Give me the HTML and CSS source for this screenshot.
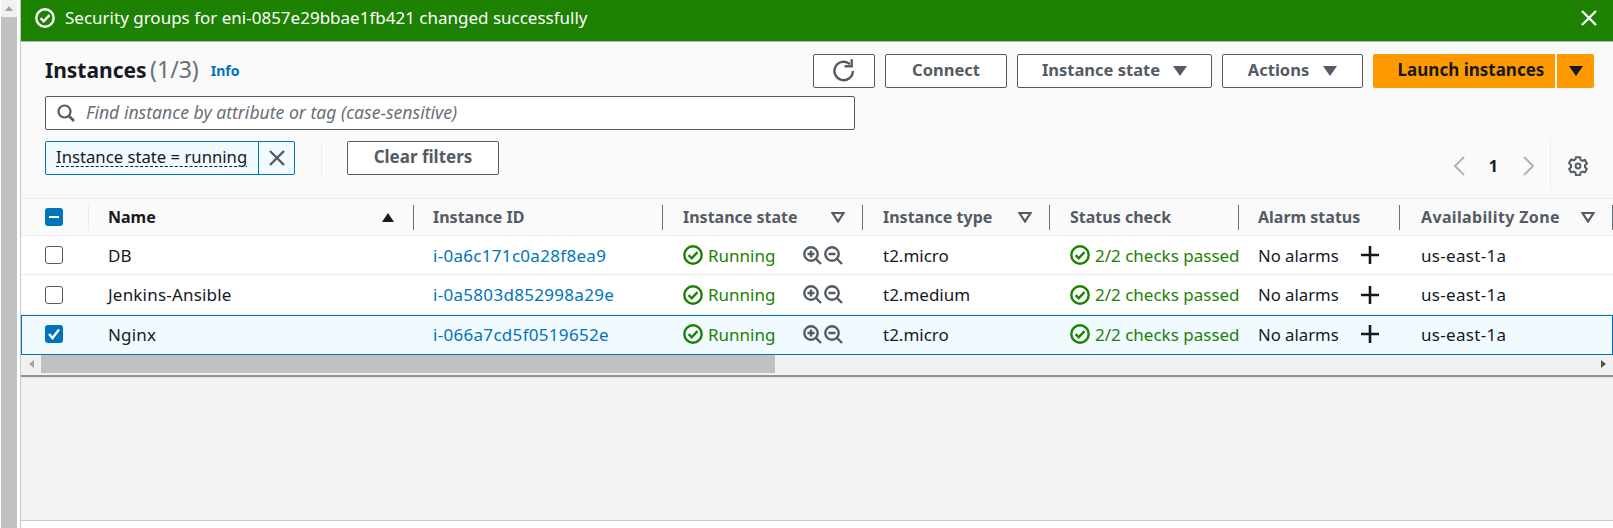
FILE: index.html
```html
<!DOCTYPE html>
<html lang="en">
<head>
    <meta charset="UTF-8">
    <title>Instances</title>
    <link rel="stylesheet" href="styles.css">
</head>
<body>
    <svg class="defs" width="0" height="0">
        <symbol id="i-check" viewBox="0 0 20 20">
            <circle cx="10" cy="10" r="8.700" fill="none" stroke="currentColor" stroke-width="2.400"/>
            <path d="M5.600 10.200l3.100 3.100 5.800-6.200" fill="none" stroke="currentColor" stroke-width="2.400"/>
        </symbol>
        <symbol id="i-zoom-in" viewBox="0 0 19 19">
            <circle cx="8" cy="8" r="6.700" fill="none" stroke="currentColor" stroke-width="2.400"/>
            <path d="M13 13l5 5M4.500 8h7M8 4.500v7" fill="none" stroke="currentColor" stroke-width="2.400"/>
        </symbol>
        <symbol id="i-zoom-out" viewBox="0 0 19 19">
            <circle cx="8" cy="8" r="6.700" fill="none" stroke="currentColor" stroke-width="2.400"/>
            <path d="M13 13l5 5M4.500 8h7" fill="none" stroke="currentColor" stroke-width="2.400"/>
        </symbol>
        <symbol id="i-plus" viewBox="0 0 18 18">
            <path d="M9 0v18M0 9h18" fill="none" stroke="currentColor" stroke-width="2.600"/>
        </symbol>
        <symbol id="i-close" viewBox="0 0 18 18">
            <path d="M2 2l14 14M16 2L2 16" fill="none" stroke="currentColor" stroke-width="2.400"/>
        </symbol>
        <symbol id="i-filter" viewBox="0 0 14 11">
            <path d="M1.500 1h11L7 9.500z" fill="none" stroke="currentColor" stroke-width="2.200"/>
        </symbol>
    </svg>

    <div class="side-scroll">
        <div class="side-arrow"><span class="arrow-up"></span></div>
        <div class="side-thumb"></div>
    </div>

    <div class="main">
        <div class="flash">
            <svg class="flash-icon"><use href="#i-check"/></svg>
            <span class="flash-text">Security groups for eni-0857e29bbae1fb421 changed successfully</span>
            <svg class="flash-close"><use href="#i-close"/></svg>
        </div>

        <div class="panel">
            <div class="top-row">
                <div class="title">
                    <h1>Instances <span class="count">(1/3)</span></h1>
                    <a class="info">Info</a>
                </div>
                <div class="actions">
                    <button class="btn btn-refresh">
                        <svg width="26" height="26" viewBox="0 0 22 22"><path d="M18.500 11a7.800 7.800 0 1 1-2.600-5.800" fill="none" stroke="currentColor" stroke-width="2"/><path d="M17.500 1v6h-6" fill="none" stroke="currentColor" stroke-width="2"/></svg>
                    </button>
                    <button class="btn btn-connect">Connect</button>
                    <button class="btn btn-state">Instance state <span class="caret"></span></button>
                    <button class="btn btn-actions">Actions <span class="caret"></span></button>
                    <div class="launch">
                        <button class="btn-launch">Launch instances</button>
                        <button class="btn-launch-caret"><span class="caret"></span></button>
                    </div>
                </div>
            </div>

            <div class="search">
                <svg width="18" height="18" viewBox="0 0 18 18"><circle cx="7.500" cy="7.500" r="6" fill="none" stroke="currentColor" stroke-width="2.200"/><path d="M12 12l5 5" fill="none" stroke="currentColor" stroke-width="2.600"/></svg>
                <span>Find instance by attribute or tag (case-sensitive)</span>
            </div>

            <div class="filter-row">
                <div class="token">
                    <span class="token-text">Instance state = running</span>
                    <span class="token-close"><svg width="18" height="18"><use href="#i-close"/></svg></span>
                </div>
                <div class="filter-sep"></div>
                <button class="btn btn-clear">Clear filters</button>
                <div class="pager">
                    <svg class="chev" width="13" height="20" viewBox="0 0 13 20"><path d="M11 1L2 10l9 9" fill="none" stroke="currentColor" stroke-width="2"/></svg>
                    <span class="page-num">1</span>
                    <svg class="chev" width="13" height="20" viewBox="0 0 13 20"><path d="M2 1l9 9-9 9" fill="none" stroke="currentColor" stroke-width="2"/></svg>
                    <div class="pager-sep">
                        <svg width="20" height="20" viewBox="0 0 20 20"><path d="M8 1.200h4l.6 2.600 1.800 1 2.500-.8 2 3.400-1.900 1.800v2l1.900 1.800-2 3.400-2.500-.8-1.800 1-.6 2.600H8l-.6-2.600-1.800-1-2.500.8-2-3.400 1.900-1.800v-2L1.100 6.900l2-3.400 2.500.8 1.800-1z" fill="none" stroke="currentColor" stroke-width="2"/><circle cx="10" cy="10" r="2.400" fill="none" stroke="currentColor" stroke-width="2"/></svg>
                    </div>
                </div>
            </div>
        </div>

        <table class="grid">
            <thead>
                <tr>
                    <th class="col-check"><span class="cb cb-on cb-mixed"></span></th>
                    <th class="col-name"><div class="th-in th-sorted">Name <span class="sort-up"></span></div></th>
                    <th class="col-id"><div class="th-in">Instance ID</div></th>
                    <th class="col-state"><div class="th-in">Instance state <svg class="flt"><use href="#i-filter"/></svg></div></th>
                    <th class="col-type"><div class="th-in">Instance type <svg class="flt"><use href="#i-filter"/></svg></div></th>
                    <th class="col-status"><div class="th-in">Status check</div></th>
                    <th class="col-alarm"><div class="th-in">Alarm status</div></th>
                    <th class="col-az"><div class="th-in th-last">Availability Zone <svg class="flt"><use href="#i-filter"/></svg></div></th>
                </tr>
            </thead>
            <tbody>
                <tr class="row-a">
                    <td class="td-check"><span class="cb"></span></td>
                    <td class="td-name">DB</td>
                    <td class="td-id"><a>i-0a6c171c0a28f8ea9</a></td>
                    <td class="td-shift"><div class="cell"><span class="ok"><svg><use href="#i-check"/></svg>Running</span><span class="zoom"><svg><use href="#i-zoom-in"/></svg><svg><use href="#i-zoom-out"/></svg></span></div></td>
                    <td class="td-shift">t2.micro</td>
                    <td class="td-shift"><div class="cell"><span class="ok"><svg><use href="#i-check"/></svg>2/2 checks passed</span></div></td>
                    <td class="td-alarm"><div class="cell">No alarms<svg class="plus"><use href="#i-plus"/></svg></div></td>
                    <td class="td-az">us-east-1a</td>
                </tr>
                <tr class="row-b">
                    <td class="td-check"><span class="cb"></span></td>
                    <td class="td-name">Jenkins-Ansible</td>
                    <td class="td-id"><a>i-0a5803d852998a29e</a></td>
                    <td class="td-shift"><div class="cell"><span class="ok"><svg><use href="#i-check"/></svg>Running</span><span class="zoom"><svg><use href="#i-zoom-in"/></svg><svg><use href="#i-zoom-out"/></svg></span></div></td>
                    <td class="td-shift">t2.medium</td>
                    <td class="td-shift"><div class="cell"><span class="ok"><svg><use href="#i-check"/></svg>2/2 checks passed</span></div></td>
                    <td class="td-alarm"><div class="cell">No alarms<svg class="plus"><use href="#i-plus"/></svg></div></td>
                    <td class="td-az">us-east-1a</td>
                </tr>
                <tr class="row-sel">
                    <td class="td-check"><span class="cb cb-on"><svg width="18" height="18" viewBox="0 0 18 18"><path d="M4 9l3.500 4L14 4.500" fill="none" stroke="#fff" stroke-width="2.400"/></svg></span></td>
                    <td class="td-name">Nginx</td>
                    <td class="td-id"><a>i-066a7cd5f0519652e</a></td>
                    <td class="td-shift"><div class="cell"><span class="ok"><svg><use href="#i-check"/></svg>Running</span><span class="zoom"><svg><use href="#i-zoom-in"/></svg><svg><use href="#i-zoom-out"/></svg></span></div></td>
                    <td class="td-shift">t2.micro</td>
                    <td class="td-shift"><div class="cell"><span class="ok"><svg><use href="#i-check"/></svg>2/2 checks passed</span></div></td>
                    <td class="td-alarm"><div class="cell">No alarms<svg class="plus"><use href="#i-plus"/></svg></div></td>
                    <td class="td-az">us-east-1a</td>
                </tr>
            </tbody>
        </table>

        <div class="h-scroll">
            <div class="h-arrow"><span class="arrow-left"></span></div>
            <div class="h-thumb"></div>
            <div class="h-track"></div>
            <div class="h-arrow"><span class="arrow-right"></span></div>
        </div>

        <div class="empty"></div>
        <div class="foot"></div>
    </div>
</body>
</html>
```

FILE: styles.css
```css
* { box-sizing: border-box; }
html, body { margin: 0; height: 528px; overflow: hidden; }
body {
    display: flex;
    background: #fff;
    font-family: "Noto Sans", Arial, sans-serif;
    font-size: 16px;
    color: #16191f;
}
.defs { display: block; flex: none; }
button { font-family: inherit; cursor: pointer; }

.side-scroll { width: 20px; flex: none; padding-left: 1px; padding-right: 3px; display: flex; flex-direction: column; }
.side-arrow { height: 17px; display: flex; justify-content: center; align-items: center; background: #f1f1f1; }
.arrow-up { border: 4px solid transparent; border-top: 0; border-bottom: 5px solid #a3a3a3; }
.side-thumb { flex: 1; background: #c1c1c1; }

.main { flex: 1; min-width: 0; display: flex; flex-direction: column; border-left: 1px solid #c4c8cc; }

.flash { height: 42px; flex: none; display: flex; align-items: center; background: #1d8102; color: #fff; padding: 0 15px 6px 14px; border-bottom: 1px solid #aab7b8; font-size: 17px; }
.flash-icon { width: 20px; height: 20px; }
.flash-text { margin-left: 10px; flex: 1; }
.flash-close { width: 18px; height: 18px; }

.panel { height: 156px; flex: none; background: #fafafa; padding: 12px 19px 0 24px; border-bottom: 5px solid #f7f7f7; }
.top-row { display: flex; justify-content: space-between; height: 34px; }
.title { display: flex; align-items: center; padding-bottom: 5px; }
h1 { margin: 0; font-size: 21px; font-weight: 700; word-spacing: -2px; }
.count { font-size: 23px; font-weight: 400; color: #687078; }
.info { margin-left: 12px; font-size: 14px; font-weight: 700; color: #0073bb; padding-top: 3px; }

.actions { display: flex; gap: 10px; }
.btn { height: 34px; border: 1px solid #545b64; border-radius: 2px; background: #fff; color: #545b64; font-size: 16.500px; font-weight: 700; padding: 0 0 3px; display: flex; align-items: center; justify-content: center; }
.btn-refresh { width: 62px; padding: 0; }
.btn-connect { width: 122px; }
.btn-state { width: 195px; gap: 13px; }
.btn-actions { width: 141px; gap: 14px; }
.caret { border: 7px solid transparent; border-top: 10px solid currentColor; border-bottom: 0; margin-top: 3px; }
.launch { display: flex; gap: 2px; }
.btn-launch, .btn-launch-caret { height: 34px; border: none; background: #f90; color: #16191f; font-size: 17px; font-weight: 700; border-radius: 2px 0 0 2px; padding: 0 0 3px 14px; }
.btn-launch { width: 182px; }
.btn-launch-caret { width: 37px; border-radius: 0 2px 2px 0; display: flex; align-items: center; justify-content: center; padding: 0; }
.btn-launch-caret .caret { margin-top: 0; }

.search { width: 810px; height: 34px; margin-top: 8px; display: flex; align-items: center; gap: 11px; padding-left: 11px; background: #fff; border: 1px solid #545b64; border-radius: 2px; color: #545b64; }
.search span { font-style: italic; color: #687078; font-size: 17.600px; padding-bottom: 2px; }

.filter-row { display: flex; margin-top: 11px; align-items: flex-start; }
.token { width: 250px; height: 34px; display: flex; background: #f1faff; border: 1px solid #0073bb; border-radius: 2px; }
.token-text { width: 212px; flex: none; padding-left: 10px; line-height: 30px; font-size: 16.700px; }
.token-text { text-decoration: underline dashed #16191f 1px; text-underline-offset: 3px; }
.token-close { flex: 1; border-left: 1px solid #0073bb; display: flex; align-items: center; justify-content: center; color: #545b64; }
.filter-sep { width: 1px; height: 33px; margin: 3px 25px 0 26px; background: #eaeded; }
.btn-clear { width: 152px; font-size: 17px; }

.pager { margin-left: auto; height: 49px; display: flex; align-items: center; color: #aab7b8; }
.page-num { color: #16191f; font-weight: 700; margin: 0 24px 0 23px; }
.chev { flex: none; }
.pager-sep { height: 49px; margin-left: 15px; border-left: 1px solid #eaeded; display: flex; align-items: center; padding: 0 6px 0 17px; color: #545b64; }

.grid { width: 1592px; flex: none; table-layout: fixed; border-collapse: separate; border-spacing: 0; }
.col-check { width: 67px; }
.col-name { width: 325px; }
.col-id { width: 249px; }
.col-state { width: 200px; }
.col-type { width: 187px; }
.col-status { width: 189px; }
.col-alarm { width: 161px; }
.col-az { width: 214px; }

th { height: 38px; padding: 0; background: #fafafa; border-bottom: 1px solid #eaeded; border-top: 1px solid #eaeded; font-weight: 700; color: #545b64; text-align: left; }
.col-check { padding-left: 24px; }
.th-in { height: 25px; display: flex; align-items: center; justify-content: space-between; border-left: 1px solid #687078; padding: 0 17px 0 19px; }
.col-state .th-in, .col-type .th-in, .col-status .th-in { padding-left: 20px; }
.col-az .th-in { padding-left: 21px; letter-spacing: .35px; }
.col-name .th-in { border-left-color: #eaeded; color: #16191f; padding-right: 19px; }
.th-last { border-right: 1px solid #687078; }
.sort-up { border: 6px solid transparent; border-top: 0; border-bottom: 9px solid #16191f; }
.flt { width: 14px; height: 11px; color: #545b64; }

td { padding: 0 0 0 20px; border-bottom: 1px solid #eaeded; background: #fff; white-space: nowrap; font-size: 17px; }
.row-a td { height: 39px; }
.row-b td { height: 40px; }
.row-sel td { height: 40px; padding-bottom: 2px; background: #f1faff; border-top: 1px solid #0073bb; border-bottom: 1px solid #0073bb; }
.row-sel td:first-child { box-shadow: inset 1px 0 0 #0073bb; }
.row-sel td:last-child { box-shadow: inset -1px 0 0 #0073bb; }
.td-check { padding-left: 24px; }
.td-name { letter-spacing: .2px; }
.td-id { letter-spacing: .3px; }
.td-id a { color: #0073bb; }
.td-shift { padding-left: 21px; }
.td-alarm { font-size: 16.700px; }
.td-az { padding-left: 22px; letter-spacing: .3px; }

.cb { width: 18px; height: 18px; display: block; border: 1px solid #545b64; border-radius: 3px; background: #fff; }
.cb-on { border: none; background: #0073bb; }
.cb-mixed { display: flex; align-items: center; justify-content: center; }
.cb-mixed::before { content: ""; width: 10px; height: 2px; background: #fff; }

.cell { display: flex; align-items: center; }
.ok { display: flex; align-items: center; gap: 5px; color: #1d8102; }
.ok svg { width: 20px; height: 20px; flex: none; }
.zoom { margin-left: auto; margin-right: 19px; display: flex; gap: 2px; color: #545b64; }
.zoom svg { width: 19px; height: 19px; }
.plus { width: 18px; height: 18px; margin-left: auto; margin-right: 20px; color: #16191f; }

.h-scroll { height: 22px; flex: none; display: flex; background: #f1f1f1; padding-bottom: 2px; border-bottom: 2px solid #8d9396; }
.h-arrow { width: 20px; display: flex; align-items: center; justify-content: center; }
.arrow-left { border: 4px solid transparent; border-left: 0; border-right: 5px solid #a3a3a3; }
.arrow-right { border: 4px solid transparent; border-right: 0; border-left: 5px solid #505050; }
.h-thumb { width: 734px; background: #c1c1c1; }
.h-track { flex: 1; }

.empty { flex: 1; background: #f2f2f2; border-top: 1px solid #e4e7e8; border-bottom: 1px solid #c8cbcc; }
.foot { height: 7px; flex: none; background: #fff; }
```
